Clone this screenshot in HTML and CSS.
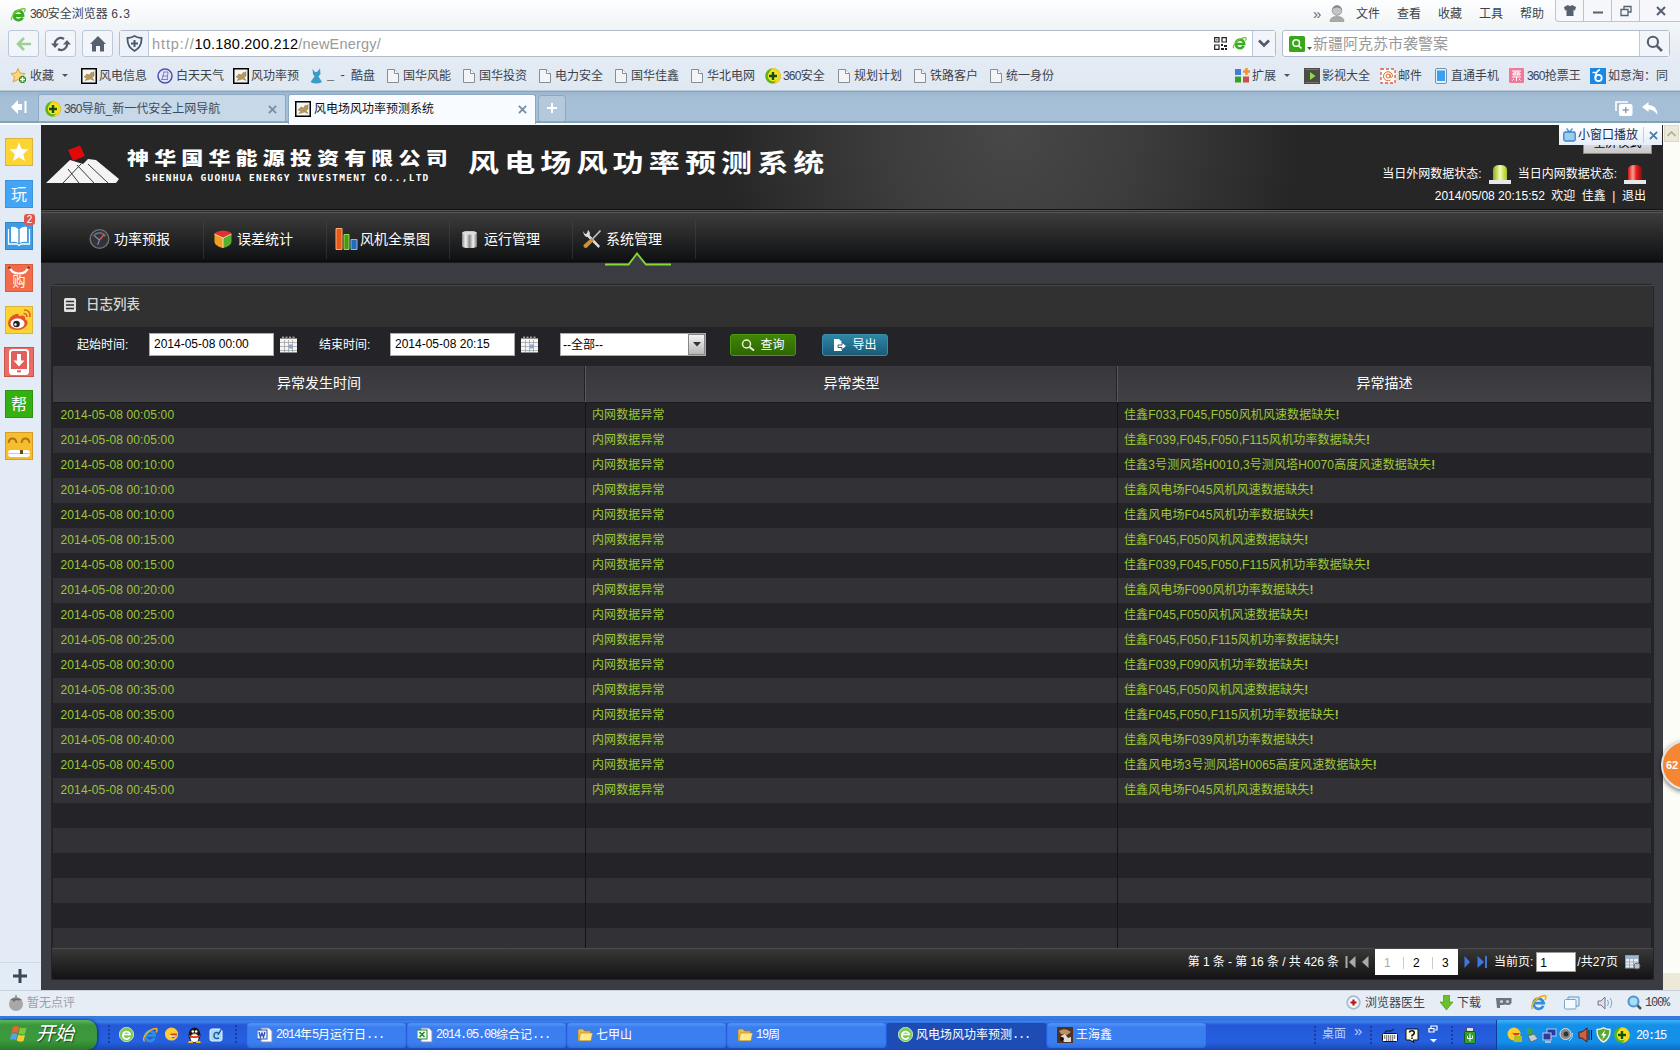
FILE: index.html
```html
<!DOCTYPE html>
<html lang="zh-CN">
<head>
<meta charset="utf-8">
<title>风电场风功率预测系统</title>
<link rel="stylesheet" href="styles.css">
</head>
<body>
<svg class="defs" width="0" height="0">
  <defs>
    <linearGradient id="gLamp" x1="0" x2="1" y1="0" y2="0"><stop offset="0" stop-color="#8fae10"/><stop offset=".5" stop-color="#f4ffb0"/><stop offset="1" stop-color="#a6c51c"/></linearGradient>
    <linearGradient id="rLamp" x1="0" x2="1" y1="0" y2="0"><stop offset="0" stop-color="#c81414"/><stop offset=".35" stop-color="#ff9c90"/><stop offset=".6" stop-color="#e02020"/><stop offset="1" stop-color="#8f0808"/></linearGradient>
    <linearGradient id="metal" x1="0" x2="1" y1="0" y2="0"><stop offset="0" stop-color="#8a8a8a"/><stop offset=".25" stop-color="#f4f4f4"/><stop offset=".5" stop-color="#8c8c8c"/><stop offset=".75" stop-color="#f0f0f0"/><stop offset="1" stop-color="#777"/></linearGradient>
    <symbol id="e-green" viewBox="0 0 16 16"><path d="M12 5.500A4.600 4.600 0 1 0 12.600 10.600M4 8.500H13A5 5 0 0 0 11.500 5" fill="none" stroke="#3aae22" stroke-width="2.800"/><path d="M2 13C0 11 5 3 14 1.500C16 1.500 15 4 14 5" fill="none" stroke="#6fcb3a" stroke-width="1.300"/></symbol>
    <symbol id="ie" viewBox="0 0 16 16"><path d="M12.500 11A4.800 4.800 0 1 1 12.800 8.500H4.500" fill="none" stroke="#2f8fe0" stroke-width="2.600"/><path d="M2.500 14.500C-1 12 6 2 14 1.500C16 1.800 14.600 4.500 14 5.500" fill="none" stroke="#f0b020" stroke-width="1.500"/></symbol>
    <symbol id="doc" viewBox="0 0 16 16"><path d="M2.500 1.500H9.500L13.500 5.500V14.500H2.500Z" fill="#f3f4f7" stroke="#888c94"/><path d="M9.500 1.500V5.500H13.500" fill="#fff" stroke="#888c94"/></symbol>
    <symbol id="cat" viewBox="0 0 16 16"><rect x=".75" y=".75" width="14.500" height="14.500" fill="#f4f4f0" stroke="#000" stroke-width="1.500"/><path d="M3 9L6 6L8.500 7L10.500 4L11.500 5L13 3.500V8L11 9.500L13 12.500L9.500 11L4 12.500L6 10Z" fill="#b89858" stroke="#7c6838" stroke-width=".4"/></symbol>
    <symbol id="s360" viewBox="0 0 16 16"><circle cx="8" cy="8" r="7.800" fill="#5cb512"/><path d="M8 .2A7.800 7.800 0 0 1 8 15.800C13 12 12 9 8 8C3 6.500 4 2 8 .2Z" fill="#ffd21c"/><circle cx="8" cy="8" r="5.200" fill="#f3e52a"/><path d="M8 4V12M4 8H12" stroke="#14500c" stroke-width="2.400"/></symbol>
    <symbol id="cal" viewBox="0 0 17 17"><rect width="17" height="16.500" fill="#f4f4f4"/><rect width="17" height="2.500" fill="#222"/><path d="M2 1.200H15" stroke="#ddd" stroke-dasharray="2 1.500"/><path d="M0 6.500H17M0 10.500H17M0 14.500H17M4.500 4V16M8.500 4V16M12.500 4V16" stroke="#9a9a9a" stroke-width=".7"/><rect x="9" y="8.500" width="4" height="4" fill="#8aa4d8"/></symbol>
    <symbol id="folder" viewBox="0 0 16 16"><path d="M1 3.500Q1 2 2.500 2H6L7.500 4H13.500V13.500H2Q1 13.500 1 12.500Z" fill="#e8bc48" stroke="#9c7420" stroke-width=".6"/><path d="M3.500 6H15.500L14 13.800H2Z" fill="#ffe98c" stroke="#a88428" stroke-width=".6"/></symbol>
    <symbol id="mag" viewBox="0 0 16 16"><circle cx="6.500" cy="6.500" r="4.800" fill="none" stroke="currentColor" stroke-width="2"/><path d="M10 10L15 15" stroke="currentColor" stroke-width="2.600"/></symbol>
    <symbol id="x" viewBox="0 0 10 10"><path d="M1 1L9 9M9 1L1 9" stroke="currentColor" stroke-width="2"/></symbol>
  </defs>
</svg>
<div class="screen">

  <header class="chrome">
    <div class="titlebar">
      <svg width="16" height="16"><use href="#e-green"/></svg>
      <span class="app-name"><i class="m">360</i>安全浏览器 <i class="m w">6.3</i></span>
      <span class="chev">»</span>
      <svg width="16" height="17" viewBox="0 0 16 17"><circle cx="8" cy="5.500" r="4.800" fill="#c4c4c4" stroke="#999"/><path d="M3.500 4Q8 1 12.500 4Q12 .5 8 .5T3.500 4" fill="#888"/><path d="M1 16.500Q1 11.500 8 11.500T15 16.500Z" fill="#aaa" stroke="#888" stroke-width=".6"/></svg>
      <span>文件</span><span>查看</span><span>收藏</span><span>工具</span><span>帮助</span>
      <div class="winbtns">
        <svg width="12" height="12" viewBox="0 0 12 12"><path d="M0 2L4 0Q6 2 8 0L12 2L11 5.500L9.500 5V11H2.500V5L1 5.500Z" fill="#56606e"/></svg>
        <svg width="12" height="12" viewBox="0 0 12 12"><path d="M1 7.500H11" stroke="#56606e" stroke-width="2"/></svg>
        <svg width="12" height="12" viewBox="0 0 12 12"><path d="M4 4V1.500H11V7H8.500M1 4.500H8V10.500H1Z" fill="none" stroke="#56606e" stroke-width="1.300"/></svg>
        <svg width="10" height="10" color="#56606e"><use href="#x"/></svg>
      </div>
    </div>

    <div class="navbar">
      <span class="nbtn"><svg width="16" height="16" viewBox="0 0 16 16"><path d="M15 8H2M8 2L2 8L8 14" fill="none" stroke="#9ed094" stroke-width="2.600"/></svg></span>
      <span class="nbtn"><svg width="20" height="16" viewBox="0 0 20 16"><path d="M4 9.500A6 6 0 0 1 13 3M16 6.500A6 6 0 0 1 7 13" fill="none" stroke="#56606e" stroke-width="2.200"/><path d="M0 7.500H8L4 12ZM12 8.500H20L16 4Z" fill="#56606e"/></svg></span>
      <span class="nbtn"><svg width="16" height="16" viewBox="0 0 16 16"><path d="M8 0L16 8H14V15.500H10V10H6V15.500H2V8H0Z" fill="#56606e"/></svg></span>
      <div class="address">
        <span class="shield"><svg width="17" height="17" viewBox="0 0 17 17"><path d="M8.500 1Q12 3 15.500 3Q16 12 8.500 16Q1 12 1.500 3Q5 3 8.500 1Z" fill="none" stroke="#4c596b" stroke-width="1.800"/><path d="M8.500 5V12M5 8.500H12" stroke="#4c596b" stroke-width="2"/></svg></span>
        <span class="url"><i>http://</i><b>10.180.200.212</b>/newEnergy/</span>
        <svg width="13" height="13" viewBox="0 0 13 13"><path d="M.7 .7H5V5H.7ZM8 .7H12.300V5H8ZM.7 8H5V12.300H.7Z" fill="none" stroke="#222" stroke-width="1.200"/><path d="M7 7H9V9H7ZM10 8H13V10H10ZM7 11H10V13H7ZM11 11H13V13H11ZM2.300 2.300H3.500V3.500H2.300Z" fill="#222"/></svg>
        <svg width="15" height="15"><use href="#e-green"/></svg>
        <span class="drop"><svg width="12" height="9" viewBox="0 0 12 9"><path d="M1 1.500L6 6.500L11 1.500" fill="none" stroke="#4c596b" stroke-width="2.600"/></svg></span>
      </div>
      <div class="search">
        <svg width="16" height="16" viewBox="0 0 16 16"><rect width="16" height="16" rx="1.500" fill="#38a718"/><circle cx="7.200" cy="7" r="3.300" fill="none" stroke="#fff" stroke-width="1.500"/><path d="M9.500 9.500L12.500 12.500" stroke="#fff" stroke-width="1.600"/></svg>
        <svg class="tri" width="5" height="4" viewBox="0 0 5 4"><path d="M0 0H5L2.500 3Z" fill="#555"/></svg>
        <span class="query">新疆阿克苏市袭警案</span>
        <span class="go"><svg width="17" height="17" color="#56606e"><use href="#mag"/></svg></span>
      </div>
    </div>

    <div class="bookmarks">
      <div class="bm-left">
        <span><svg width="16" height="16" viewBox="0 0 16 16"><path d="M7 .5L9 5L14 5.500L10.500 9L11.500 14L7 11.500L2 14L3.500 9L0 5.500L5 5Z" fill="#ffd778" stroke="#d89428" stroke-width=".8"/><path d="M11.500 8V15M8 11.500H15" stroke="#2c8a1c" stroke-width="4"/><path d="M11.500 9V14M9 11.500H14" stroke="#fff" stroke-width="1.600"/></svg>收藏<i class="caret"></i></span>
        <span class="t"><svg width="16" height="16"><use href="#cat"/></svg>风电信息</span>
        <span><svg width="16" height="16" viewBox="0 0 16 16"><circle cx="8" cy="8" r="7" fill="#e4e6f8" stroke="#4c54b0" stroke-width="1.500"/><path d="M6 4H11L10 12M7 4L5 12M5 8H11M4 11.500H11" stroke="#7880c8" fill="none"/></svg>白天天气</span>
        <span class="t"><svg width="16" height="16"><use href="#cat"/></svg>风功率预</span>
        <span class="t"><svg width="16" height="16" viewBox="0 0 16 16"><path d="M3.500 1L6 4H8L11 .5L11.500 6L9.500 8.500L13 14Q7 17 1.500 14L5.500 8.500L4 6Z" fill="#3a9cc8"/></svg><i class="m w">_ - </i>酷盘</span>
        <span class="t"><svg width="16" height="16"><use href="#doc"/></svg>国华风能</span>
        <span class="t"><svg width="16" height="16"><use href="#doc"/></svg>国华投资</span>
        <span class="t"><svg width="16" height="16"><use href="#doc"/></svg>电力安全</span>
        <span class="t"><svg width="16" height="16"><use href="#doc"/></svg>国华佳鑫</span>
        <span class="t"><svg width="16" height="16"><use href="#doc"/></svg>华北电网</span>
        <span class="t"><svg width="16" height="16"><use href="#s360"/></svg><i class="m">360</i>安全</span>
        <span class="t"><svg width="16" height="16"><use href="#doc"/></svg>规划计划</span>
        <span class="t"><svg width="16" height="16"><use href="#doc"/></svg>铁路客户</span>
        <span class="t"><svg width="16" height="16"><use href="#doc"/></svg>统一身份</span>
      </div>
      <div class="bm-right">
        <span class="t"><svg width="15" height="15" viewBox="0 0 15 15"><rect y="1" width="6" height="6" fill="#4678dc"/><path d="M11.500 0V7M8 3.500H15" stroke="#f09030" stroke-width="2.400"/><rect y="8.500" width="6" height="6" fill="#38a020"/><rect x="8" y="8.500" width="6" height="6" fill="#c85048"/></svg>扩展<i class="caret"></i></span>
        <span class="t"><svg width="16" height="16" viewBox="0 0 16 16"><rect width="16" height="16" fill="#4c4c44"/><path d="M1.500 1.500H15M1.500 14.500H15" stroke="#999" stroke-dasharray="1 1"/><path d="M6 4L11.500 8L6 12Z" fill="#90d850"/></svg>影视大全</span>
        <span class="t"><svg width="16" height="16" viewBox="0 0 16 16"><rect x="1" y="1" width="14" height="14" fill="#fff" stroke="#e05840" stroke-width="1.300" stroke-dasharray="3 2"/><circle cx="8" cy="8" r="2" fill="none" stroke="#e06828"/><path d="M10 6V9Q12 10.500 12.500 8A4.500 4.500 0 1 0 10.500 12" fill="none" stroke="#e06828"/></svg>邮件</span>
        <span class="t"><svg width="15" height="16" viewBox="0 0 15 16"><rect x="1.500" y=".5" width="11" height="15" rx="1.500" fill="#e8f0f8" stroke="#7890a8"/><rect x="3" y="2.500" width="8" height="10.500" fill="#38a0f0"/></svg>直通手机</span>
        <span><svg width="15" height="15" viewBox="0 0 15 15"><rect width="15" height="15" rx="1" fill="#f07898"/><path d="M3 3H12M4 5H11V7H4ZM3 9H12M7.500 9V13M5 11L3.500 12.500M10 11L11.500 12.500M6 3V7M9 3V7" stroke="#fff" fill="none"/></svg><i class="m">360</i>抢票王</span>
        <span class="t"><svg width="16" height="16" viewBox="0 0 16 16"><rect width="16" height="16" fill="#1888e8"/><circle cx="8.500" cy="10" r="3.200" fill="none" stroke="#fff" stroke-width="1.800"/><path d="M10 1.500Q5 4 5.500 10" stroke="#fff" stroke-width="1.700" fill="none"/><path d="M2.500 4.500H6" stroke="#fff" stroke-width="1.400"/></svg>如意淘：同</span>
      </div>
    </div>

    <div class="tabs">
      <svg class="fold" width="16" height="14" viewBox="0 0 16 14"><path d="M0 7L7 0V4H11V10H7V14Z" fill="#fff"/><path d="M14.500 1V13" stroke="#fff" stroke-width="2"/></svg>
      <div class="tab"><svg width="16" height="16"><use href="#s360"/></svg><span><i class="m">360</i>导航_新一代安全上网导航</span><svg width="9" height="9" color="#7b8da3"><use href="#x"/></svg></div>
      <div class="tab on"><svg width="16" height="16"><use href="#cat"/></svg><span>风电场风功率预测系统</span><svg width="9" height="9" color="#7b8da3"><use href="#x"/></svg></div>
      <div class="newtab"><svg width="10" height="10" viewBox="0 0 10 10"><path d="M5 0V10M0 5H10" stroke="#fff" stroke-width="2"/></svg></div>
      <svg class="reopen" width="18" height="15" viewBox="0 0 18 15"><path d="M1 10V1H13" fill="none" stroke="#fff" stroke-width="1.600"/><rect x="4" y="3" width="13.500" height="12" rx="2" fill="#fff"/><path d="M10.700 6V12M7.700 9H13.700" stroke="#8a9cb0" stroke-width="1.400"/></svg>
      <svg width="17" height="13" viewBox="0 0 17 13"><path d="M0 5L6.500 0V3Q15 3 15.500 13Q12 7.500 6.500 7.500V10Z" fill="#fff"/></svg>
    </div>
  </header>

  <main class="middle">
    <aside class="side">
      <svg width="28" height="28" viewBox="0 0 28 28"><rect x=".5" y=".5" width="27" height="27" fill="#fcd535" stroke="#dcb43c"/><path d="M14 4.500L16.600 11L23.500 11.500L18.200 16L20 23L14 19.200L8 23L9.800 16L4.500 11.500L11.400 11Z" fill="#fff"/></svg>
      <span class="tile blue">玩</span>
      <svg width="28" height="28" viewBox="0 0 28 28"><rect x=".5" y=".5" width="27" height="27" fill="#3d9ae4" stroke="#3385c8"/><path d="M3.500 7V22H12L14 23.500L16 22H24.500V7" fill="none" stroke="#fff" stroke-width="1.300"/><path d="M6 5Q10 4 13.300 7V21Q10 19 6 20ZM22 5Q18 4 14.700 7V21Q18 19 22 20Z" fill="#fff"/></svg>
      <span class="tile buy"><svg width="28" height="12" viewBox="0 0 28 12"><path d="M4.500 2.500Q6 9.500 14 9.500T23.500 2.500" fill="none" stroke="#fff" stroke-width="2.200"/><circle cx="4.500" cy="3.500" r="1.600" fill="#9c3c20"/><circle cx="23.500" cy="3.500" r="1.600" fill="#9c3c20"/></svg>购</span>
      <svg width="28" height="28" viewBox="0 0 28 28"><rect x=".5" y=".5" width="27" height="27" fill="#fcd535" stroke="#dcb43c"/><path d="M3 17Q4 10 11 8Q14 7 14 10Q21 8 20 13Q24 15 22 19Q19 24 12 24Q3 24 3 17Z" fill="#e4552c"/><ellipse cx="12.500" cy="17.500" rx="7" ry="5" fill="#fff"/><circle cx="11.500" cy="18" r="3.300" fill="#222"/><circle cx="10.500" cy="18.500" r="1.200" fill="#fff"/><path d="M18.500 7.500Q22 7.500 22 11M19 4Q25.500 4 25 11" fill="none" stroke="#e4652c" stroke-width="1.700"/></svg>
      <svg class="phone" width="30" height="30" viewBox="0 0 30 30"><rect x=".5" y=".5" width="29" height="29" fill="#ea6c64" stroke="#c8544c"/><rect x="6" y="3" width="18" height="24" rx="2.500" fill="#e0605c" stroke="#fff" stroke-width="2"/><path d="M13 7H17V13.500H20.500L15 19.500L9.500 13.500H13Z" fill="#fff"/><path d="M6 22H24V26H6Z" fill="#fff"/><path d="M13 24.300H17" stroke="#e86058" stroke-width="2"/></svg>
      <span class="tile green">帮</span>
      <svg width="28" height="28" viewBox="0 0 28 28"><rect x=".5" y=".5" width="27" height="27" fill="#f8bd2c" stroke="#d89c28"/><path d="M3.500 11Q4 6.500 7.500 6.500T11.500 11M16.500 11Q17 6.500 20.500 6.500T24.500 11" fill="none" stroke="#a87420" stroke-width="1.800"/><rect x="3" y="18" width="22" height="7" rx="3" fill="#fff"/><path d="M3 21.500H25" stroke="#d8b878" stroke-width=".8"/><rect x="15" y="18" width="3" height="4" fill="#6c4c18"/></svg>
      <em class="badge">2</em>
      <div class="plus"><svg width="14" height="14" viewBox="0 0 14 14"><path d="M7 0V14M0 7H14" stroke="#3c4654" stroke-width="3"/></svg></div>
    </aside>

    <div class="page">
      <div class="banner">
        <svg class="logo" width="74" height="40" viewBox="0 0 74 40"><path d="M0 38L24 15L37 19L42 14L50 15L73 34L70 38Z" fill="#f4f4f4"/><path d="M17 38L35 19M33 38L22 24M48 38L31 20M62 38L42 19" stroke="#262626" stroke-width=".9" fill="none"/><path d="M22 5L34 .5L39 11L27 16Z" fill="#e00808"/></svg>
        <div class="company"><b>神华国华能源投资有限公司</b><small>SHENHUA GUOHUA ENERGY INVESTMENT CO..,LTD</small></div>
        <h1>风电场风功率预测系统</h1>
        <div class="state">
          <button class="full">全屏模式</button>
          <p>当日外网数据状态:<svg width="22" height="20" viewBox="0 0 22 20"><path d="M4 16V6Q4 1 11 1T18 6V16Z" fill="url(#gLamp)"/><rect y="16" width="22" height="4" fill="#e8e8e8"/></svg>当日内网数据状态:<svg width="22" height="20" viewBox="0 0 22 20"><path d="M4 16V6Q4 1 11 1T18 6V16Z" fill="url(#rLamp)"/><rect y="16" width="22" height="4" fill="#e8e8e8"/></svg></p>
          <p class="who"><span>2014/05/08 20:15:52</span><span>欢迎</span><span>佳鑫</span><span>|</span><span>退出</span></p>
        </div>
      </div>

      <nav class="menu">
        <a><svg width="21" height="22" viewBox="0 0 22 22"><circle cx="11" cy="11" r="9.800" fill="#303438" stroke="#707070" stroke-width="1.500"/><path d="M5 8A7 7 0 0 1 17 8" stroke="#667" fill="none" stroke-width="2"/><path d="M11 12L16 6" stroke="#e05840" stroke-width="1.500"/><path d="M11 12L6 8M11 12L9 17" stroke="#7c98b8" stroke-width="1.200"/></svg>功率预报</a>
        <a><svg width="20" height="20" viewBox="0 0 20 20"><path d="M1.500 5Q2 2 10 1.500Q18 2 18.500 5L10 9Z" fill="#e03030"/><path d="M1.500 5L10 9V19Q2 17 1.500 13Z" fill="#f0a020"/><path d="M18.500 5L10 9V19Q18 17 18.500 13Z" fill="#58b030"/><path d="M1.500 5L10 9L18.500 5M10 9V19" stroke="#fff4d0" fill="none" stroke-width=".8"/></svg>误差统计</a>
        <a class="bars"><svg width="23" height="22" viewBox="0 0 23 22"><path d="M1 .5H7V21.500H1Z" fill="#e85818" stroke="#ffb070"/><path d="M9 6.500H14V21.500H9Z" fill="#489818" stroke="#98d858"/><path d="M16 11.500H22V21.500H16Z" fill="#2868b8" stroke="#88b8f0"/></svg>风机全景图</a>
        <a class="can"><svg width="17" height="19" viewBox="0 0 17 19"><path d="M1 3Q1 1 8.500 1T16 3V16Q16 18 8.500 18T1 16Z" fill="url(#metal)"/><ellipse cx="8.500" cy="3" rx="7.200" ry="1.800" fill="#ddd"/></svg>运行管理</a>
        <a class="on"><svg width="20" height="20" viewBox="0 0 20 20"><path d="M1 2L3 5L5 4.500L6 1Q9 4 7.500 6L18 17L16.500 19L5.500 8Q2 8 1 2Z" fill="#ddd"/><path d="M18.500 1.500L11 9.500" stroke="#bbb" stroke-width="1.800"/><path d="M9.500 9L12 11.500L4.500 19Q1 19 1.500 16Z" fill="#d09038"/></svg>系统管理<svg class="mark" width="68" height="14" viewBox="0 0 68 14"><path d="M24 12.500L33 1.500L42 12.500V14H24Z" fill="#3c3d42"/><path d="M1 12.500H24.500L33 1.500L42 12.500H67" fill="none" stroke="#86d837" stroke-width="1.800"/></svg></a>
      </nav>

      <section class="panel">
        <h2><svg width="12" height="14" viewBox="0 0 12 14"><rect width="12" height="14" rx="1.500" fill="#e0e0e0"/><path d="M2 3.500H10M2 7H10M2 10.500H10" stroke="#303030" stroke-width="1.400"/></svg>日志列表</h2>
        <div class="filter">
          <label>起始时间:</label><span class="in">2014-05-08 00:00</span><svg width="17" height="17"><use href="#cal"/></svg>
          <label>结束时间:</label><span class="in">2014-05-08 20:15</span><svg width="17" height="17"><use href="#cal"/></svg>
          <span class="sel">--全部--<i><svg width="8" height="5" viewBox="0 0 8 5"><path d="M0 0H8L4 4.500Z" fill="#333"/></svg></i></span>
          <span class="btn go1"><svg width="14" height="12" viewBox="0 0 14 12"><circle cx="5.500" cy="5" r="4" fill="none" stroke="#e8f4d8" stroke-width="1.500"/><path d="M8.500 8L13 11.500" stroke="#e8f4d8" stroke-width="2"/></svg>查询</span>
          <span class="btn go2"><svg width="14" height="14" viewBox="0 0 14 14"><path d="M1 1H6L9 4V13H1Z" fill="#fff"/><path d="M5 7H9V4L13.500 8L9 12V9.500H5Z" fill="#fff" stroke="#226080"/></svg>导出</span>
        </div>
        <div class="table">
          <div class="th"><span>异常发生时间</span><span>异常类型</span><span>异常描述</span></div>
          <div class="tr"><span>2014-05-08 00:05:00</span><span>内网数据异常</span><span>佳鑫F033,F045,F050风机风速数据缺失<b>!</b></span></div>
          <div class="tr"><span>2014-05-08 00:05:00</span><span>内网数据异常</span><span>佳鑫F039,F045,F050,F115风机功率数据缺失<b>!</b></span></div>
          <div class="tr"><span>2014-05-08 00:10:00</span><span>内网数据异常</span><span>佳鑫3号测风塔H0010,3号测风塔H0070高度风速数据缺失<b>!</b></span></div>
          <div class="tr"><span>2014-05-08 00:10:00</span><span>内网数据异常</span><span>佳鑫风电场F045风机风速数据缺失<b>!</b></span></div>
          <div class="tr"><span>2014-05-08 00:10:00</span><span>内网数据异常</span><span>佳鑫风电场F045风机功率数据缺失<b>!</b></span></div>
          <div class="tr"><span>2014-05-08 00:15:00</span><span>内网数据异常</span><span>佳鑫F045,F050风机风速数据缺失<b>!</b></span></div>
          <div class="tr"><span>2014-05-08 00:15:00</span><span>内网数据异常</span><span>佳鑫F039,F045,F050,F115风机功率数据缺失<b>!</b></span></div>
          <div class="tr"><span>2014-05-08 00:20:00</span><span>内网数据异常</span><span>佳鑫风电场F090风机功率数据缺失<b>!</b></span></div>
          <div class="tr"><span>2014-05-08 00:25:00</span><span>内网数据异常</span><span>佳鑫F045,F050风机风速数据缺失<b>!</b></span></div>
          <div class="tr"><span>2014-05-08 00:25:00</span><span>内网数据异常</span><span>佳鑫F045,F050,F115风机功率数据缺失<b>!</b></span></div>
          <div class="tr"><span>2014-05-08 00:30:00</span><span>内网数据异常</span><span>佳鑫F039,F090风机功率数据缺失<b>!</b></span></div>
          <div class="tr"><span>2014-05-08 00:35:00</span><span>内网数据异常</span><span>佳鑫F045,F050风机风速数据缺失<b>!</b></span></div>
          <div class="tr"><span>2014-05-08 00:35:00</span><span>内网数据异常</span><span>佳鑫F045,F050,F115风机功率数据缺失<b>!</b></span></div>
          <div class="tr"><span>2014-05-08 00:40:00</span><span>内网数据异常</span><span>佳鑫风电场F039风机功率数据缺失<b>!</b></span></div>
          <div class="tr"><span>2014-05-08 00:45:00</span><span>内网数据异常</span><span>佳鑫风电场3号测风塔H0065高度风速数据缺失<b>!</b></span></div>
          <div class="tr"><span>2014-05-08 00:45:00</span><span>内网数据异常</span><span>佳鑫风电场F045风机风速数据缺失<b>!</b></span></div>
          <div class="tr"><span></span><span></span><span></span></div>
          <div class="tr"><span></span><span></span><span></span></div>
          <div class="tr"><span></span><span></span><span></span></div>
          <div class="tr"><span></span><span></span><span></span></div>
          <div class="tr"><span></span><span></span><span></span></div>
          <div class="tr"><span></span><span></span><span></span></div>
        </div>
        <div class="pager">
          <span class="total">第 1 条 - 第 16 条 / 共 426 条</span>
          <svg width="11" height="12" viewBox="0 0 11 12"><path d="M1.500 0V12" stroke="#aaa" stroke-width="2"/><path d="M10.500 0V12L4 6Z" fill="#aaa"/></svg>
          <svg width="7" height="12" viewBox="0 0 7 12"><path d="M6.500 0V12L0 6Z" fill="#aaa"/></svg>
          <span class="nums"><i>1</i><i>2</i><i>3</i></span>
          <svg width="7" height="12" viewBox="0 0 7 12"><path d="M.5 0V12L6 6Z" fill="#3c78e0"/></svg>
          <svg width="11" height="12" viewBox="0 0 11 12"><path d="M.5 0V12L7 6Z" fill="#3c78e0"/><path d="M9 0V12" stroke="#3c78e0" stroke-width="2"/></svg>
          <span>当前页:</span><span class="cur">1</span><span>/共27页</span>
          <svg width="16" height="15" viewBox="0 0 16 15"><rect x=".5" y=".5" width="13" height="12.500" fill="#e8eef4" stroke="#89a"/><rect x="1" y="1" width="12" height="3" fill="#9cb4cc"/><path d="M1 7H13M1 10H13M4.500 4V13M8.500 4V13" stroke="#8aa0b8" stroke-width=".8"/><circle cx="12" cy="11" r="3" fill="#b8c0c8" stroke="#667"/></svg>
        </div>
      </section>
    </div>
    <div class="vscroll"><i><svg width="9" height="6" viewBox="0 0 9 6"><path d="M.5 5L4.500 1L8.500 5" fill="none" stroke="#b0ac9c" stroke-width="1.600"/></svg></i><b></b></div>
    <div class="popup"><svg width="13" height="14" viewBox="0 0 13 14"><path d="M3.500 .5L6.500 4L9.500 .5" fill="none" stroke="#4c94cc" stroke-width="1.300"/><rect x=".8" y="4" width="11.400" height="9" rx="1.500" fill="#9cccf0" stroke="#3c84c0" stroke-width="1.300"/></svg><span>小窗口播放</span><svg width="9" height="9" color="#4c7ca8"><use href="#x"/></svg></div>
    <div class="ball">62</div>
  </main>

  <div class="status">
    <svg width="16" height="16" viewBox="0 0 16 16"><circle cx="8" cy="9" r="7" fill="#a8a8a8"/><path d="M2 5Q6 2 8 4Q10 2 14 5L10 5.500L8 5L6 7L5 5.500Z" fill="#6c6c6c"/><path d="M8 0V4" stroke="#666"/></svg>
    <span class="dim">暂无点评</span>
    <svg width="15" height="15" viewBox="0 0 15 15"><circle cx="7.500" cy="7.500" r="6.300" fill="#f4f6fa" stroke="#a4bcd4" stroke-width="1.800"/><path d="M7.500 4.500V10.500M4.500 7.500H10.500" stroke="#b81818" stroke-width="2.200"/></svg><span>浏览器医生</span>
    <svg width="13" height="15" viewBox="0 0 13 15"><path d="M3.500 0H9.500V7H13L6.500 15L0 7H3.500Z" fill="#6cc02c" stroke="#3c9018" stroke-width=".6"/></svg><span>下载</span>
    <svg width="16" height="12" viewBox="0 0 16 12"><path d="M0 1H15.500V6Q14 9 9.500 7.500L7 8H4V11H1Z" fill="#6c747e"/><circle cx="5.500" cy="4.500" r="1.600" fill="#ccd"/><circle cx="11.500" cy="4.500" r="1.600" fill="#ccd"/></svg>
    <svg width="17" height="17"><use href="#ie"/></svg>
    <svg width="16" height="14" viewBox="0 0 16 14"><path d="M4 3V1H15V10H12" fill="#dcecf8" stroke="#5c9cc8"/><rect x=".5" y="3.500" width="11.500" height="9.500" rx="1" fill="#f4faff" stroke="#74a4c8"/></svg>
    <svg width="16" height="14" viewBox="0 0 16 14"><path d="M1 5H4L8 1V13L4 9H1Z" fill="#dde" stroke="#778"/><path d="M10.500 4Q12.500 7 10.500 10M13 2Q16.500 7 13 12" fill="none" stroke="#78a8d0"/></svg>
    <svg width="15" height="15" viewBox="0 0 15 15"><circle cx="6.500" cy="6.500" r="5" fill="#a8dcf8" stroke="#4c94cc" stroke-width="2"/><path d="M10.500 10.500L14 14" stroke="#555" stroke-width="2.500"/></svg><span><i class="m w">100%</i></span>
  </div>

  <footer class="taskbar">
    <div class="start"><svg width="18" height="18" viewBox="0 0 18 18"><path d="M3 2Q6 0 9 2L7.500 8Q5 6.500 1.500 8Z" fill="#f06030"/><path d="M10 2.500Q13 4 16.500 2.500L15 9Q12 10 8.500 8.500Z" fill="#80c838"/><path d="M1.300 9Q4 7.500 7.300 9L6 15Q3 13.500 0 15Z" fill="#58a0f0"/><path d="M8.300 9.500Q11 11 15 10L13.500 16Q10 17.500 6.700 15.500Z" fill="#f8cc30"/></svg><em>开始</em></div>
    <div class="quick">
      <i class="grip"></i>
      <svg width="15" height="15" viewBox="0 0 16 16"><circle cx="8" cy="8" r="7.600" fill="#7ccc50" stroke="#e8ffe0" stroke-width=".8"/><path d="M11.500 11A4 4 0 1 1 12 8H4.500" fill="none" stroke="#fff" stroke-width="1.800"/></svg>
      <svg width="16" height="16"><use href="#ie"/></svg>
      <svg width="15" height="15" viewBox="0 0 16 16"><circle cx="8" cy="7.500" r="7" fill="#ffcc30"/><path d="M7 7H14Q13 12 9 12Q6.500 10 7 7" fill="#d84018"/><path d="M5 9H13L12 10.500H7Z" fill="#fff"/></svg>
      <svg width="15" height="16" viewBox="0 0 15 16"><ellipse cx="7.500" cy="8" rx="6" ry="7.500" fill="#181818"/><ellipse cx="7.500" cy="11" rx="4" ry="4" fill="#fff"/><circle cx="5.800" cy="4.500" r="1.300" fill="#fff"/><circle cx="9.200" cy="4.500" r="1.300" fill="#fff"/><path d="M2 8Q7.500 10.500 13 8V10Q7.500 12 2 10Z" fill="#e02818"/><path d="M2 14H6V16H1ZM9 14H13L14 16H9ZM5.500 6.500H9.500L7.500 8Z" fill="#f8b820"/></svg>
      <svg width="16" height="16" viewBox="0 0 16 16"><rect x="1" y="2" width="12" height="12" rx="2" fill="#a8d8f8" stroke="#e8f4ff"/><path d="M9.500 6Q5 4.500 5 8.500T10 11M13 1L9 8" fill="none" stroke="#1c5ca0" stroke-width="1.500"/></svg>
      <i class="grip"></i>
    </div>
    <div class="tasks">
      <div><svg width="16" height="16" viewBox="0 0 16 16"><path d="M4 1H12L15 4V15H4Z" fill="#fff" stroke="#88a"/><rect y="3" width="10" height="9" fill="#e8f0ff" stroke="#2850a8"/><path d="M2 5L3.500 10L5 6L6.500 10L8 5" fill="none" stroke="#2850a8" stroke-width="1.300"/></svg><i class="m w">2014</i>年<i class="m w">5</i>月运行日<i class="m w">...</i></div>
      <div><svg width="16" height="16" viewBox="0 0 16 16"><path d="M4 1H12L15 4V15H4Z" fill="#fff" stroke="#88a"/><rect y="3" width="10" height="9" fill="#e8ffe8" stroke="#288038"/><path d="M2.500 5L7.500 10M7.500 5L2.500 10" stroke="#288038" stroke-width="1.500"/></svg><i class="m w">2014.05.08</i>综合记<i class="m w">...</i></div>
      <div><svg width="16" height="16"><use href="#folder"/></svg>七甲山</div>
      <div><svg width="16" height="16"><use href="#folder"/></svg><i class="m w">19</i>周</div>
      <div class="on"><svg width="15" height="15" viewBox="0 0 16 16"><circle cx="8" cy="8" r="7.600" fill="#7ccc50" stroke="#e8ffe0" stroke-width=".8"/><path d="M11.500 11A4 4 0 1 1 12 8H4.500" fill="none" stroke="#fff" stroke-width="1.800"/></svg>风电场风功率预测<i class="m w">...</i></div>
      <div><svg width="16" height="16" viewBox="0 0 16 16"><rect width="16" height="16" fill="#4c3424"/><path d="M2 4Q8 0 14 5L10 8L4 7Z" fill="#c09060"/><path d="M4 9L8 7L11 11L14 10V15H7Z" fill="#e8d8d0"/><circle cx="5" cy="12" r="2" fill="#181010"/></svg>王海鑫</div>
    </div>
    <div class="extras">
      <i class="grip"></i><span>桌面</span><span class="ch">»</span><i class="grip"></i>
      <svg width="16" height="13" viewBox="0 0 16 13"><rect x=".5" y="4.500" width="15" height="8" rx="1" fill="#fff" stroke="#111"/><path d="M2 7H14M2 9H14M4 11H12" stroke="#111" stroke-dasharray="1.300 .7"/><path d="M3 4Q3 1 6 2T12 0" stroke="#111" fill="none"/></svg>
      <svg width="14" height="15" viewBox="0 0 14 15"><path d="M1 1H13V12H8L9 14.500L5 12H1Z" fill="#fffce0" stroke="#111"/><path d="M4.500 4.500Q4.500 2.800 7 2.800T9.300 5Q9 6.500 7 7.500V8.500M7 9.500V11" fill="none" stroke="#111" stroke-width="1.500"/></svg>
      <svg class="mini" width="10" height="20" viewBox="0 0 10 20"><path d="M3 3V1H9V5H7M1 3.500H6V7H1Z" fill="none" stroke="#fff" stroke-width="1.200"/><path d="M2 14H9L5.500 17.500Z" fill="#fff"/></svg>
      <i class="grip"></i>
      <svg width="12" height="17" viewBox="0 0 12 17"><rect x="2.500" y=".5" width="7" height="4" fill="#ddd" stroke="#555"/><rect x=".5" y="4.500" width="11" height="12" rx="1" fill="#30a030" stroke="#185818"/><path d="M6 6.500V14.500M3.500 9V11.500H8.500V8.500" stroke="#fff" fill="none"/></svg>
    </div>
    <div class="tray">
      <svg width="16" height="16" viewBox="0 0 16 16"><circle cx="7" cy="7" r="6.500" fill="#ffcc30"/><path d="M5 6H13Q12 9 8 8.500Z" fill="#d84018"/><rect x="7" y="9" width="8" height="6" fill="#b0c020"/></svg>
      <svg width="14" height="16" viewBox="0 0 14 16"><path d="M2 1L8 2L7 8L2 7Z" fill="#40a838"/><path d="M3 9L9 7L13 12L6 15Z" fill="#c8ccd0" stroke="#555" stroke-width=".7"/></svg>
      <svg width="15" height="15" viewBox="0 0 15 15"><rect x="5" y="1" width="9" height="7" fill="#2838a0" stroke="#b8c8e8"/><rect x="1" y="5" width="8" height="7" fill="#303c98" stroke="#c0cce8"/><path d="M3 14H9" stroke="#ccd" stroke-width="1.500"/></svg>
      <svg width="16" height="16" viewBox="0 0 16 16"><circle cx="6.500" cy="7" r="5.500" fill="#888" stroke="#ddd"/><circle cx="7" cy="7" r="2.500" fill="#333"/><path d="M10 14Q14 11 13.500 6" fill="none" stroke="#c8dcf0"/></svg>
      <svg width="15" height="16" viewBox="0 0 15 16"><path d="M1 5H4L9 1V15L4 11H1Z" fill="#d06040" stroke="#501808"/><path d="M11 3V13M13.500 3V13" stroke="#301008"/></svg>
      <svg width="15" height="16" viewBox="0 0 15 16"><path d="M7.500 .8Q10.500 2.500 14 2.500Q14.500 11 7.500 15.200Q.5 11 1 2.500Q4.500 2.500 7.500 .8Z" fill="#58a830" stroke="#f0f0e0" stroke-width="1.400"/><path d="M9 3L5 8.500H7.500L6 13L10.500 7H8Z" fill="#fff"/></svg>
      <svg width="16" height="16"><use href="#s360"/></svg>
      <span><i class="m w">20:15</i></span>
    </div>
  </footer>
</div>
</body>
</html>
```
FILE: styles.css
```css
* { box-sizing: border-box; }
body { margin: 0; overflow: hidden; font: 12px/16px "Liberation Sans", "Noto Sans CJK SC", sans-serif; color: #3c424c; }
.defs { position: absolute; }
svg { display: block; flex: none; }
span, label { white-space: nowrap; }
i { font-style: normal; }
.m { letter-spacing: -0.8px; }
.m.w { font-family: "Liberation Mono", monospace; font-size: 12px; letter-spacing: -1.2px; white-space: pre; }
.screen { width: 1680px; height: 1050px; display: flex; flex-direction: column; }

/* browser chrome */
.chrome { height: 125px; background: linear-gradient(#fdfeff 0, #f2f5f7 26px, #e4ebf4 60px, #dfe8f1 91px); }
.titlebar { height: 30px; padding-left: 10px; display: grid; grid-template-columns: 20px 1283px 16px 27px 41px 41px 41px 41px 35px 125px; align-items: center; }
.titlebar > span, .titlebar > svg { margin-top: -3px; }
.titlebar .app-name, .titlebar > svg:first-child { margin-top: -1px; }
.chev { font-size: 15px; color: #667; }
.winbtns { align-self: start; height: 22px; border: 1px solid #b9c4d4; border-top: 0; border-right: 0; border-radius: 0 0 0 4px; display: grid; grid-template-columns: 28px 28px 28px 41px; align-items: center; background: linear-gradient(90deg, transparent 27px, #b9c4d4 27px 28px, transparent 28px 55px, #b9c4d4 55px 56px, transparent 56px 83px, #b9c4d4 83px 84px, transparent 84px) #f5f7fa; }
.winbtns svg { justify-self: center; }
.navbar { height: 27px; padding: 0 10px 0 8px; display: flex; }
.nbtn { width: 31px; margin-right: 6px; border: 1px solid #bcc8d8; border-radius: 3px; background: #f2f5fa; display: flex; align-items: center; justify-content: center; }
.address { width: 1157px; margin-right: 6px; border: 1px solid #b0bccc; border-radius: 3px; background: #fff; display: flex; align-items: center; }
.shield { width: 29px; height: 25px; border-right: 1px solid #b9c8dc; background: #eef3fa; display: flex; align-items: center; justify-content: center; }
.url { flex: 1; padding-left: 3px; font-size: 14.500px; letter-spacing: .2px; color: #9a9a9a; }
.url i { letter-spacing: .9px; }
.url b { font-weight: normal; color: #000; }
.address > svg { margin-right: 5px; }
.address > svg + svg { margin-right: 3px; }
.address > svg:nth-of-type(2) { margin-right: 5px; }
.drop { width: 23px; height: 25px; border-left: 1px solid #b9c8dc; background: #f2f5fa; display: flex; align-items: center; justify-content: center; }
.search { flex: 1; border: 1px solid #b0bccc; border-radius: 3px; background: #fff; display: flex; align-items: center; padding-left: 6px; }
.tri { margin: 11px 1px 0 2px; }
.query { flex: 1; font-size: 15px; color: #999; }
.go { width: 30px; height: 25px; border-left: 1px solid #b9c8dc; background: #f2f5fa; display: flex; align-items: center; justify-content: center; }
.bookmarks { height: 34px; padding: 4px 0 0 11px; display: flex; justify-content: space-between; border-bottom: 1px solid #b8c9d9; }
.bm-left, .bm-right { display: grid; align-items: center; }
.bm-left { grid-template-columns: 70px repeat(9, 76px) 71px repeat(3, 76px); }
.bm-right { grid-template-columns: 69px 76px 54px 75px 81px 90px; }
.bookmarks span { display: flex; align-items: center; overflow: hidden; }
.bookmarks svg { margin-right: 3px; }
.bookmarks .t svg { margin-right: 2px; }
.caret { border: 3px solid transparent; border-top-color: #555; margin: 3px 0 0 8px; }
.tabs { height: 34px; border-top: 1px solid #8ba5bb; background: linear-gradient(#9bb6ce, #a4bfd6 6px 29px, #84a2b5 29px 31px, #fbfeff 31px); padding-left: 11px; display: flex; align-items: center; }
.fold { margin: -3px 11px 0 0; }
.tab { width: 248px; height: 28px; margin: -1px 2px 0 0; padding: 2px 8px 0 6px; border: 1px solid #8aa8c2; border-radius: 3px 3px 0 0; background: #c7d8e8; display: flex; align-items: center; color: #3d4a5c; gap: 3px; }
.tab span { flex: 1; }
.tab.on { background: #f8fbff; height: 30px; margin-top: 1px; color: #111; border-bottom: 0; padding-bottom: 3px; }
.newtab { width: 28px; height: 27px; margin: -1px auto 0 0; border: 1px solid #8aa8c2; border-radius: 3px; background: #b4cadc; display: flex; align-items: center; justify-content: center; }
.reopen { margin-right: 9px; }
.tabs > svg:last-child { margin-right: 21px; }

/* middle area */
.middle { height: 865px; display: flex; position: relative; }
.side { width: 41px; padding: 13px 0 0 5px; background: #e3ebf6; display: flex; flex-direction: column; gap: 14px; position: relative; }
.phone { margin: -1px; }
.tile { width: 28px; height: 28px; font-size: 16px; line-height: 27px; color: #fff; text-align: center; border: 1px solid #3c94dc; flex: none; }
.blue { background: #42a5f5; }
.green { background: #34b010; border-color: #2c9410; }
.buy { background: #f26b4a; border-color: #d85c3c; font-size: 13px; line-height: 14px; }
.buy svg { margin: -1px; }
.badge { position: absolute; left: 24px; top: 89px; width: 11px; height: 11px; border-radius: 3px; background: #e0574c; color: #fff; font: 10px/11px "Liberation Sans", sans-serif; text-align: center; }
.plus { margin: auto 0 0 -5px; height: 28px; border-top: 1px solid #cfd9e6; padding: 6px 0 0 13px; }
.page { width: 1622px; background: #3b3c41; display: flex; flex-direction: column; }
.banner { height: 85px; background: radial-gradient(ellipse 290px 330px at 970px 0, #484848, #3c3c3c 45%, #262626); display: flex; padding-left: 5px; border-bottom: 1px solid #111; }
.logo { margin-top: 20px; }
.company { margin: 20px 0 0 7px; width: 341px; color: #fff; }
.company b { display: block; font-size: 22px; font-weight: 900; line-height: 28px; letter-spacing: 5.150px; transform: scaleY(.84); white-space: nowrap; }
.company small { display: block; margin-left: 18px; font: bold 9.500px/10px "DejaVu Sans Mono", monospace; letter-spacing: 1.220px; white-space: nowrap; }
h1 { margin: 15px auto 0 0; color: #fff; font-size: 31px; font-weight: bold; line-height: 42px; letter-spacing: 5.150px; transform: scaleY(.82); white-space: nowrap; }
.state { color: #fff; width: 270px; margin-right: 17px; display: flex; flex-direction: column; align-items: flex-end; }
.state p { margin: 0; display: flex; align-items: center; }
.full { width: 69px; height: 22px; margin: 7px -6px 10px 0; padding: 0; font: 12px/20px "Liberation Sans", "Noto Sans CJK SC", sans-serif; border: 1px solid #888; background: linear-gradient(#f4f4f4, #c8c8c8); flex: none; }
.state p svg { margin-left: 7px; margin-right: 7px; }
.state p svg:last-child { margin-right: 0; }
.who { padding-top: 4px; gap: 6.500px; }
.menu { height: 53px; border-top: 1px solid #555; background: linear-gradient(#303030 0 1px, #555 1px 2px, #3c3c3c 2px, #262626 50%, #101214 48px, #0c0c0e 51px, #2c2c30); display: flex; padding-left: 39px; }
.menu a { width: 123px; height: 52px; padding: 4px 0 0 9px; color: #fff; font-size: 14px; display: flex; align-items: center; gap: 4px; position: relative; background: linear-gradient(#3e3e3e, #2a2a2a) right 10px / 1px 38px no-repeat; white-space: nowrap; }
.menu a:first-child { width: 124px; }
.menu .bars { padding-left: 8px; gap: 2px; }
.menu .can { padding-left: 11px; gap: 6px; }
.mark { position: absolute; left: 31px; top: 41px; }
.panel { width: 1603px; height: 696px; margin: 21px 0 0 10px; border: 1px solid #242428; border-radius: 4px 4px 0 0; background: #242428; display: flex; flex-direction: column; }
h2 { margin: 0; height: 42px; background: #313131; border-top: 1px solid #484848; color: #d8d8d8; font-size: 13.500px; font-weight: 500; display: flex; align-items: center; padding: 0 0 3px 12px; gap: 10px; }
.filter { height: 39px; padding: 0 0 4px 25px; display: flex; align-items: center; color: #fff; }
.filter label { width: 72px; }
.in { width: 125px; height: 23px; margin-right: 6px; padding-left: 4px; border: 1px solid #aaa; background: #fff; color: #000; line-height: 21px; }
.filter svg + label { margin-left: 22px; width: 71px; }
.sel { width: 146px; height: 23px; margin: 0 24px 0 22px; padding-left: 2px; border: 1px solid #aaa; background: #fff; color: #000; display: flex; justify-content: space-between; align-items: center; }
.sel i { width: 17px; height: 21px; background: linear-gradient(#f4f4f4, #b8b8b8); border: 1px solid #888; display: flex; align-items: center; justify-content: center; }
.btn { width: 66px; height: 22px; border-radius: 3px; display: flex; align-items: center; justify-content: center; gap: 5px; margin-right: 26px; }
.go1 { background: linear-gradient(#3f8605, #2f6502); border: 1px solid #4e9810; }
.go2 { background: linear-gradient(#2d87a8, #1c5a78); border: 1px solid #3a8cab; }
.table { height: 582px; margin: 0 0 0 1px; width: 1598px; overflow: hidden; }
.th, .tr { display: grid; grid-template-columns: 532px 532px 534px; }
.th { height: 37px; background: linear-gradient(#38383c, #414145); border-bottom: 1px solid #1c1c20; color: #fff; font-size: 14px; line-height: 35px; text-align: center; }
.th span + span { border-left: 1px solid #5a5a5e; box-shadow: -2px 0 0 -1px #222226; }
.tr { height: 25px; background: #242428; color: #9ec738; line-height: 24px; letter-spacing: .12px; }
.tr:nth-child(odd) { background: #313136; }
.tr span { padding-left: 6px; }
.tr span:first-child { padding-left: 7.500px; }
.tr span + span { border-left: 1px solid #151518; }
.pager { height: 31px; background: linear-gradient(#4a4a4a 0 1px, #383838 1px, #141414 30px); color: #fff; display: flex; align-items: center; justify-content: flex-end; padding: 0 12px 3px 0; border-radius: 0 0 3px 3px; }
.total { margin-right: 6px; letter-spacing: -.06px; }
.pager svg { margin-right: 6px; }
.nums { height: 26px; width: 83px; background: #fff; color: #000; display: grid; grid-template-columns: 29px 29px 25px; align-items: center; margin-right: 6px; }
.nums i { padding-left: 9px; border-right: 1px solid transparent; margin-top: 2px; line-height: 12px; }
.nums i:first-child { color: #aaa; }
.nums i:not(:last-child) { border-right-color: #ccc; }
.cur { width: 40px; height: 20px; margin: 0 1px 0 3px; padding-left: 3px; background: #fff; color: #000; border: 1px solid #999; line-height: 20px; }
.pager .cur + span { margin-right: 7px; }
.pager svg:last-child { margin-right: 0; }
.vscroll { flex: 1; background: #fdfdf8; display: flex; flex-direction: column; justify-content: space-between; align-items: center; }
.vscroll i { width: 15px; height: 17px; background: #ece9d8; border: 1px solid #ddd9c8; display: flex; align-items: center; justify-content: center; }
.vscroll b { width: 17px; height: 17px; background: #ece9d8; }
.popup { position: absolute; left: 1559px; top: 0; width: 103px; height: 20px; background: linear-gradient(#fdfeff, #e6eefa); display: flex; align-items: center; padding-left: 4px; color: #16284a; }
.popup span { margin: 0 5px 0 2px; padding-right: 5px; border-right: 1px solid #c4d0e0; }
.ball { position: absolute; left: 1661px; top: 615px; width: 50px; height: 50px; border: 2px solid #e8e4e0; border-radius: 50%; background: #f58634; box-shadow: 0 2px 5px #0008; color: #fff; font-size: 11px; font-weight: bold; line-height: 46px; padding-left: 3px; }

/* status bar */
.status { height: 26px; background: #e7edf5; border-top: 1px solid #c8d2de; display: grid; grid-template-columns: 19px 1319px 19px 75px 17px 39px 34px 34px 33px 30px 18px 35px; padding: 0 0 2px 8px; align-items: center; }
.dim { color: #9a9fa8; }

/* taskbar */
.taskbar { height: 34px; background: linear-gradient(#3a7ade 0 3px, #2a6ad4 4px, #3f87ee 5px, #2458d8 9px, #2560e0 26px, #1c46b0); display: flex; color: #fff; }
.start { width: 97px; margin-top: 4px; height: 30px; border-radius: 0 10px 10px 0; background: linear-gradient(#5cb85c, #3c963c 5px, #3b9a3c 20px, #2a7a2a); box-shadow: 1px 0 3px #0c2c80; display: flex; align-items: center; padding: 0 0 2px 10px; gap: 8px; }
.start em { font-size: 19px; line-height: 24px; text-shadow: 1px 1px 1px #184818; }
.quick { width: 150px; padding-top: 3px; display: grid; grid-template-columns: 12px 23px 22px 23px 22px 25px 12px; padding-left: 10px; align-items: center; }
.grip { width: 4px; height: 21px; background: radial-gradient(circle, #183c98 1.200px, transparent 1.500px) 0 0 / 4px 4px; }
.tasks { width: 960px; display: grid; grid-template-columns: repeat(6, 160px); padding-top: 7px; }
.tasks div { height: 25px; margin-right: 1px; border-radius: 3px; background: linear-gradient(#5a9af8, #3b7ef0 4px 20px, #3070e0); box-shadow: inset 0 0 1px #184ab0; display: flex; align-items: center; padding: 0 0 2px 10px; white-space: nowrap; }
.tasks div svg { margin-right: 3px; }
.tasks .on { background: #1c4cb4; padding-left: 11px; }
.extras { width: 289px; display: grid; grid-template-columns: 9px 32px 15px 13px 23px 23px 22px 14px 20px; padding: 4px 0 0 106px; align-items: center; }
.extras span { color: #b4d0f8; margin-top: -2px; }
.extras .ch { font-size: 15px; padding-bottom: 7px; }
.tray { flex: 1; margin-top: 4px; border-left: 1px solid #0c3c98; background: linear-gradient(#3cb4f8, #1490e8 5px 22px, #0c6cc8); display: grid; grid-template-columns: 18px 17px 17px 19px 18px 18px 22px 40px; padding: 0 0 0 10px; align-items: center; }
```
